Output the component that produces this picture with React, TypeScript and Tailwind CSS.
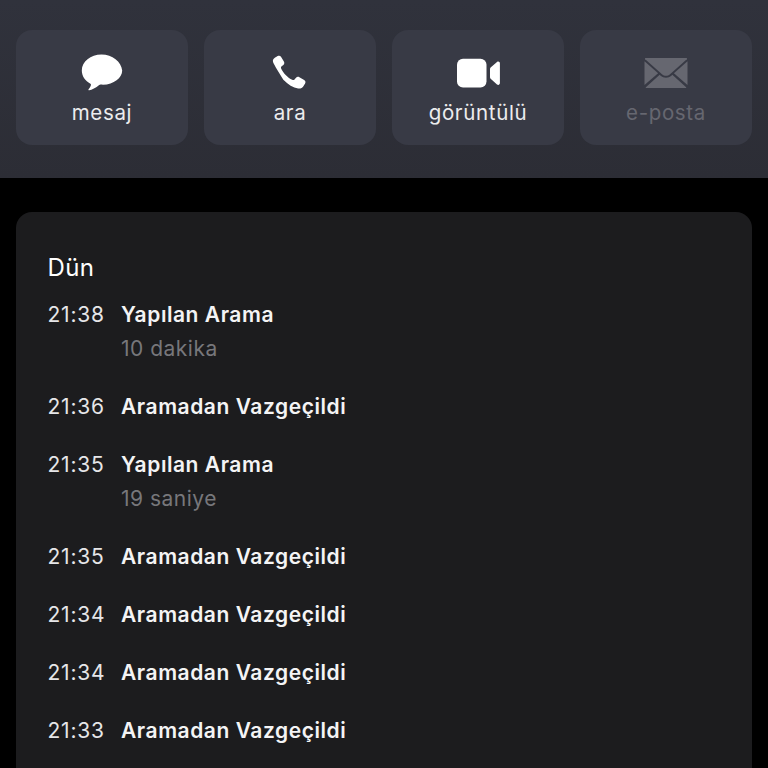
const font = "[font-family:Inter,'Noto_Sans',sans-serif]";

function Bubble() {
  return (
    <svg width="42" height="42" viewBox="0 0 42 42" fill="currentColor">
      <path d="M20.500 2.500C9.600 2.500 .8 9.600 .8 18.500c0 5.600 3.400 10.400 8.600 13.300.6.4.7 1 .4 1.800-.6 1.600-1.500 3-2.200 3.700-.4.5-.1 1.100.6 1 2.500-.4 6.800-2.200 10-5.200.5-.4 1-.6 1.700-.5.7.1 1.400.1 2 .1 10.900 0 19.300-7 19.300-14.200C40.200 9.600 31.400 2.500 20.500 2.500Z" />
    </svg>
  );
}

function Phone() {
  return (
    <svg width="38" height="38" viewBox="0 0 36 36" fill="currentColor">
      <path d="M3.600 3.600 6.300 2c1.300-.7 2.500-.4 3.300.9l2.600 4.300c.7 1.200.5 2.300-.5 3.200l-1.600 1.300c-.7.6-.8 1.300-.4 2.200.9 2 2.300 3.900 4.200 5.900 2.100 2.100 4.100 3.700 6.200 4.700.9.4 1.600.3 2.200-.4l1.400-1.600c.9-1 2-1.200 3.200-.5l4.500 2.600c1.300.8 1.600 2 .9 3.300l-1.600 2.700c-1.100 1.700-2.800 2.400-5 2.100-4.600-.7-9.600-3.800-14-8.300C6.900 16.100 3.500 11.200 2 7.700c-.6-1.600 0-3.100 1.600-4.100Z" />
    </svg>
  );
}

function Video() {
  return (
    <svg width="44" height="30" viewBox="0 0 44 30" fill="currentColor">
      <rect x="1" y="0.800" width="29.500" height="28.800" rx="6" />
      <path d="M34 11.200c0-.8.3-1.400.9-1.900l6.100-5.400c1.300-1 2.900-.3 2.900 1.400v19.800c0 1.700-1.600 2.400-2.900 1.400l-6.100-5.400c-.6-.5-.9-1.100-.9-1.900Z" />
    </svg>
  );
}

function Mail() {
  return (
    <svg width="44" height="32" viewBox="0 0 44 32" fill="currentColor">
      <path d="M1.200 2.200 18 17.200c2.400 2.100 5.600 2.100 8 0L42.800 2.200 43 1H1Z" />
      <path d="M0.500 4.200V28l13.600-11.700Z" />
      <path d="M43.500 4.200V28L29.900 16.300Z" />
      <path d="M15.700 17.800 1.600 30.600 2 31h40l.4-.4-14.100-12.800-.9.9c-3 2.600-7.800 2.600-10.800 0Z" />
    </svg>
  );
}

function Action({ icon, label, dim }: { icon: React.ReactNode; label: string; dim?: boolean }) {
  return (
    <div className={`flex h-[115px] flex-col items-center rounded-2xl bg-[#383a45] ${dim ? "text-[#666770]" : "text-white"}`}>
      <div className="flex h-[66px] w-full items-center justify-center pt-[19px]">{icon}</div>
      <div className={`mt-[3px] text-[20.5px] leading-[28px] tracking-[0.65px] ${dim ? "" : "text-[#ececee]"}`}>{label}</div>
    </div>
  );
}

function Row({ time, title, sub }: { time: string; title: string; sub?: string }) {
  return (
    <div className="flex pb-[29px]">
      <div className="w-[73.500px] shrink-0 text-[21px] leading-[29px] tracking-[0.8px] text-[#e6e6e8]">{time}</div>
      <div className="flex flex-col">
        <div className="text-[21px] font-semibold leading-[29px] tracking-[0.55px] text-[#f4f4f5]">{title}</div>
        {sub && <div className="mt-[5px] text-[21px] leading-[29px] tracking-[0.5px] text-[#77777b]">{sub}</div>}
      </div>
    </div>
  );
}

export default function App() {
  return (
    <div className={`h-[768px] w-[768px] overflow-hidden bg-black ${font}`}>
      <div className="grid h-[178px] grid-cols-4 gap-4 bg-gradient-to-b from-[#30323c] to-[#2c2d35] px-4 pt-[30px] [grid-template-rows:115px]">
        <Action icon={<Bubble />} label="mesaj" />
        <Action icon={<Phone />} label="ara" />
        <Action icon={<Video />} label="görüntülü" />
        <Action icon={<Mail />} label="e-posta" dim />
      </div>
      <div className="mx-4 mt-[34px] h-[600px] rounded-2xl bg-[#1c1c1e] pl-[31.500px] pr-8 pt-[40px]">
        <div className="mb-[16px] text-[24px] leading-[32px] tracking-[0.4px] text-white">Dün</div>
        <Row time="21:38" title="Yapılan Arama" sub="10 dakika" />
        <Row time="21:36" title="Aramadan Vazgeçildi" />
        <Row time="21:35" title="Yapılan Arama" sub="19 saniye" />
        <Row time="21:35" title="Aramadan Vazgeçildi" />
        <Row time="21:34" title="Aramadan Vazgeçildi" />
        <Row time="21:34" title="Aramadan Vazgeçildi" />
        <Row time="21:33" title="Aramadan Vazgeçildi" />
      </div>
    </div>
  );
}
